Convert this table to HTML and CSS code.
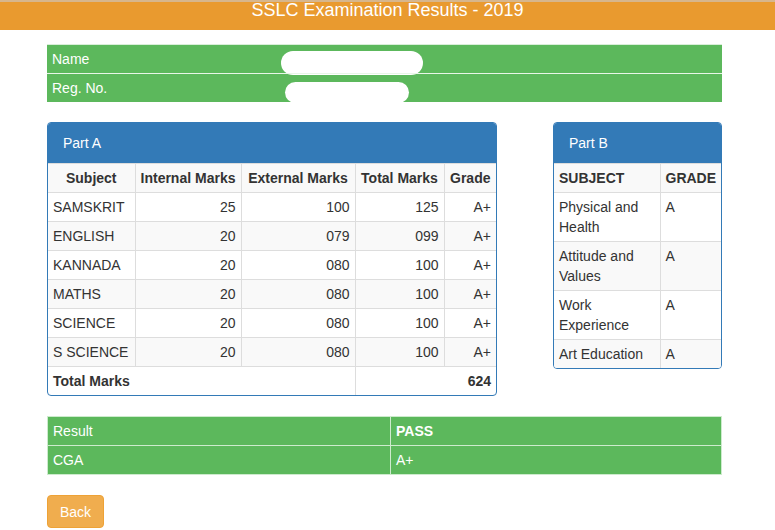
FILE: index.html
```html
<!DOCTYPE html>
<html lang="en">
<head>
<meta charset="utf-8">
<title>SSLC Examination Results - 2019</title>
<link rel="stylesheet" href="styles.css">
</head>
<body>
<header class="topbar">SSLC Examination Results - 2019</header>
<main class="container">
  <section class="info">
    <div class="info-row">
      <span class="info-label">Name</span>
      <span class="blob blob-name"></span>
    </div>
    <div class="info-row">
      <span class="info-label">Reg. No.</span>
      <span class="blob blob-reg"></span>
    </div>
  </section>

  <section class="panels">
    <div class="panel panel-a">
      <div class="panel-heading">Part A</div>
      <table class="grid">
        <colgroup>
          <col style="width:87px"><col style="width:106px"><col style="width:114px"><col style="width:89px"><col style="width:52px">
        </colgroup>
        <tbody>
          <tr class="head center"><th>Subject</th><th>Internal Marks</th><th>External Marks</th><th>Total Marks</th><th>Grade</th></tr>
          <tr><td>SAMSKRIT</td><td class="r">25</td><td class="r">100</td><td class="r">125</td><td class="r">A+</td></tr>
          <tr><td>ENGLISH</td><td class="r">20</td><td class="r">079</td><td class="r">099</td><td class="r">A+</td></tr>
          <tr><td>KANNADA</td><td class="r">20</td><td class="r">080</td><td class="r">100</td><td class="r">A+</td></tr>
          <tr><td>MATHS</td><td class="r">20</td><td class="r">080</td><td class="r">100</td><td class="r">A+</td></tr>
          <tr><td>SCIENCE</td><td class="r">20</td><td class="r">080</td><td class="r">100</td><td class="r">A+</td></tr>
          <tr><td>S SCIENCE</td><td class="r">20</td><td class="r">080</td><td class="r">100</td><td class="r">A+</td></tr>
          <tr><th colspan="3" class="l">Total Marks</th><th colspan="2" class="r">624</th></tr>
        </tbody>
      </table>
    </div>

    <div class="panel panel-b">
      <div class="panel-heading">Part B</div>
      <table class="grid">
        <colgroup><col style="width:106px"><col style="width:61px"></colgroup>
        <tbody>
          <tr class="head"><th class="l">SUBJECT</th><th class="l">GRADE</th></tr>
          <tr><td>Physical and Health</td><td>A</td></tr>
          <tr><td>Attitude and Values</td><td>A</td></tr>
          <tr><td>Work Experience</td><td>A</td></tr>
          <tr><td>Art Education</td><td>A</td></tr>
        </tbody>
      </table>
    </div>
  </section>

  <table class="result">
    <colgroup><col style="width:343px"><col></colgroup>
    <tbody>
      <tr><td>Result</td><td class="b">PASS</td></tr>
      <tr><td>CGA</td><td>A+</td></tr>
    </tbody>
  </table>

  <button class="btn-back" type="button">Back</button>
</main>
</body>
</html>
```

FILE: styles.css
```css
* { box-sizing: border-box; }

html, body {
  margin: 0;
  padding: 0;
  background: #fff;
  font-family: "Liberation Sans", Arial, sans-serif;
  font-size: 14px;
  line-height: 20px;
  color: #333;
}

.topbar {
  height: 30px;
  background: #e99a2f;
  border-top: 2px solid #d7b68c;
  color: #fff;
  font-size: 18px;
  line-height: 17px;
  text-align: center;
}

.container {
  width: 675px;
  margin: 14px 0 0 47px;
}

/* Name / Reg block */
.info {
  background: #5cb85c;
  color: #fff;
}

.info-row {
  position: relative;
  height: 29px;
  border-top: 1px solid #d9eed9;
  display: flex;
  align-items: center;
  padding-left: 5px;
}

.info-row + .info-row {
  border-top-color: #e8f6e8;
}

.blob {
  position: absolute;
  background: #fff;
  border-radius: 12px;
}

.blob-name {
  left: 234px;
  top: 6px;
  width: 142px;
  height: 24px;
}

.blob-reg {
  left: 238px;
  top: 8px;
  width: 124px;
  height: 21px;
  border-radius: 11px;
}

/* Panels */
.panels {
  display: flex;
  justify-content: space-between;
  align-items: flex-start;
  margin-top: 20px;
}

.panel {
  border: 1px solid #337ab7;
  border-radius: 4px;
  overflow: hidden;
  background: #fff;
}

.panel-a { width: 450px; }
.panel-b { width: 169px; }

.panel-heading {
  background: #337ab7;
  color: #fff;
  padding: 10px 15px;
  height: 40px;
  line-height: 20px;
  font-size: 14px;
}

.grid {
  width: 100%;
  border-collapse: collapse;
  table-layout: fixed;
}

.grid th,
.grid td {
  border: 1px solid #ddd;
  padding: 4px 5px;
  line-height: 20px;
  vertical-align: top;
  text-align: left;
  font-weight: normal;
}

.grid th { font-weight: bold; }

.grid tr:last-child th,
.grid tr:last-child td { border-bottom: 0; }

.grid tr > :first-child { border-left: 0; }
.grid tr > :last-child { border-right: 0; }

.grid tbody tr:nth-child(odd) { background: #f9f9f9; }

.grid .head.center th { text-align: center; }
.grid .r { text-align: right; }
.grid .l { text-align: left; }

/* Result */
.result {
  width: 675px;
  margin-top: 20px;
  border-collapse: collapse;
  table-layout: fixed;
  background: #5cb85c;
  color: #fff;
}

.result td {
  border: 1px solid #cdebcd;
  padding: 4px 5px;
  height: 29px;
  line-height: 20px;
}

.result .b { font-weight: bold; }

.btn-back {
  display: block;
  margin-top: 20px;
  width: 57px;
  height: 33px;
  padding: 0;
  background: #f0ad4e;
  border: 1px solid #eea236;
  border-radius: 4px;
  color: #fff;
  font-family: "Liberation Sans", Arial, sans-serif;
  font-size: 14px;
  line-height: 20px;
  cursor: pointer;
}
```
